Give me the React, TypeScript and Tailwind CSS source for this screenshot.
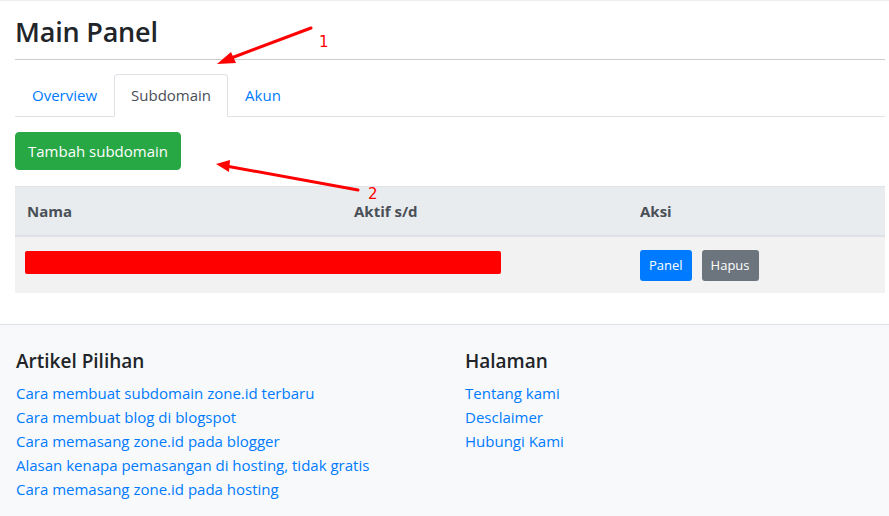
import React from "react";

export default function App() {
  const font = { fontFamily: '"Segoe UI", "Open Sans", "Noto Sans", sans-serif' };
  return (
    <div className="relative w-[889px] h-[516px] overflow-hidden bg-white text-[#212529]" style={font}>
      <div className="border-t border-[#eeeeee]" />
      <div className="px-[15px] pr-[4px]">
        <h1 className="text-[27px] leading-[34px] font-semibold pt-[14px] pb-[10px] tracking-[-0.2px]">Main Panel</h1>
        <div className="border-t border-[#cccccc]" />
        <div className="mt-[14px] flex border-b border-[#dee2e6] text-[15px] leading-6">
          <div className="px-4 py-2 text-[#007bff] border border-transparent">Overview</div>
          <div className="px-4 py-2 text-[#495057] border border-[#dee2e6] border-b-white rounded-t-[4px] -mb-px bg-white">Subdomain</div>
          <div className="px-4 py-2 text-[#007bff] border border-transparent">Akun</div>
        </div>
        <div className="mt-[15px]">
          <button className="bg-[#28a745] text-white text-[15px] leading-6 px-3 py-[6px] border border-[#28a745] rounded-[4px]">Tambah subdomain</button>
        </div>
        <div className="mt-[16px]">
          <div className="grid grid-cols-[327px_286px_1fr] bg-[#e9ecef] border-t border-[#dee2e6] border-b-2 font-bold text-[#495057] text-[15px] leading-6">
            <div className="px-3 py-3">Nama</div>
            <div className="px-3 py-3">Aktif s/d</div>
            <div className="px-3 py-3">Aksi</div>
          </div>
          <div className="grid grid-cols-[327px_286px_1fr] bg-[#f2f2f2] h-[56px] items-center">
            <div className="relative h-full">
              <div className="absolute left-[10px] top-[14px] w-[476px] h-[23px] bg-[#ff0000] rounded-[2px]" />
            </div>
            <div />
            <div className="px-3 flex gap-[10px]">
              <button className="bg-[#007bff] text-white text-[13px] leading-[21px] px-[9px] py-[5px] rounded-[3px]">Panel</button>
              <button className="bg-[#6c757d] text-white text-[13px] leading-[21px] px-[9px] py-[5px] rounded-[3px]">Hapus</button>
            </div>
          </div>
        </div>
      </div>
      <div className="mt-[31px] border-t border-[#dee2e6] bg-[#f8f9fa] h-[300px] px-[16px] pt-[24px]">
        <div className="grid grid-cols-[449px_1fr]">
          <div>
            <h5 className="text-[19px] leading-6 font-semibold mb-[8px]">Artikel Pilihan</h5>
            <div className="flex flex-col text-[15px] leading-6 text-[#007bff]">
              <span>Cara membuat subdomain zone.id terbaru</span>
              <span>Cara membuat blog di blogspot</span>
              <span>Cara memasang zone.id pada blogger</span>
              <span>Alasan kenapa pemasangan di hosting, tidak gratis</span>
              <span>Cara memasang zone.id pada hosting</span>
            </div>
          </div>
          <div>
            <h5 className="text-[19px] leading-6 font-semibold mb-[8px]">Halaman</h5>
            <div className="flex flex-col text-[15px] leading-6 text-[#007bff]">
              <span>Tentang kami</span>
              <span>Desclaimer</span>
              <span>Hubungi Kami</span>
            </div>
          </div>
        </div>
      </div>

      <svg className="absolute left-0 top-0 pointer-events-none" width="889" height="516">
        <line x1="311" y1="28" x2="226" y2="60" stroke="#ff0000" strokeWidth="3" strokeLinecap="round" />
        <polygon points="217,64 231,52 236,63" fill="#ff0000" />
        <line x1="358" y1="190" x2="226" y2="166" stroke="#ff0000" strokeWidth="3" strokeLinecap="round" />
        <polygon points="216,164 230,160 229,172" fill="#ff0000" />
      </svg>
      <span className="absolute left-[319px] top-[33px] text-[15px] leading-[18px] text-[#ff0000]" style={{ fontFamily: '"DejaVu Sans", sans-serif' }}>1</span>
      <span className="absolute left-[368px] top-[185px] text-[15px] leading-[18px] text-[#ff0000]" style={{ fontFamily: '"DejaVu Sans", sans-serif' }}>2</span>
    </div>
  );
}
